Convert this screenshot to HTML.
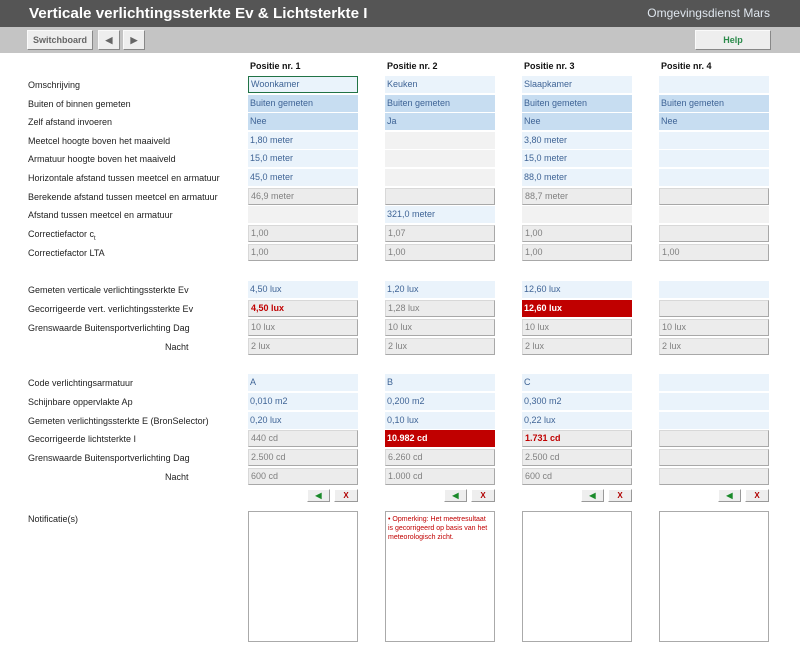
<!DOCTYPE html>
<html><head><meta charset="utf-8"><style>
*{margin:0;padding:0;box-sizing:border-box}
body{width:800px;height:671px;background:#fff;font-family:"Liberation Sans",Arial,sans-serif;position:relative;overflow:hidden;font-size:9px}
#hd{position:absolute;left:0;top:0;width:800px;height:27px;background:#555}
#hd .t{position:absolute;left:29px;top:5px;color:#fff;font-weight:bold;font-size:15.2px}
#hd .o{position:absolute;right:30px;top:6px;color:#dfe6ee;font-size:12px}
#tb{position:absolute;left:0;top:27px;width:800px;height:26px;background:#c4c4c4}
.bt{position:absolute;top:3px;height:20px;background:#eee;border:1px solid #fafafa;border-right-color:#888;border-bottom-color:#888;color:#666;font-weight:bold;font-size:9px;text-align:center;line-height:18px}
.lb{position:absolute;left:28px;color:#222;font-size:9px}
.h{position:absolute;top:61px;font-weight:bold;font-size:9px;color:#111}
.c{position:absolute;width:110px;height:17px;padding-left:2px;line-height:17px;font-size:9px;color:#3f6496}
.l{background:#eaf3fb}
.m{background:#c7ddf1}
.g{background:#ececec;border:1px solid #d8d8d8;border-right-color:#a8a8a8;border-bottom-color:#a8a8a8;color:#808080;line-height:15px}
.e{background:#f2f2f2}
.r{background:#c00000;color:#fff;font-weight:bold}
.rb{color:#c00000;font-weight:bold}
.sb{position:absolute;top:489px;height:13px;background:#eee;border:1px solid #fff;border-right-color:#999;border-bottom-color:#999;font-size:8px;font-weight:bold;text-align:center;line-height:11px}
.nt{position:absolute;top:511px;width:110px;height:131px;border:1px solid #aaa;background:#fff}
</style></head><body>
<div id="hd"><div class="t">Verticale verlichtingssterkte Ev &amp; Lichtsterkte I</div><div class="o">Omgevingsdienst Mars</div></div>
<div id="tb">
<div class="bt" style="left:27px;width:66px">Switchboard</div>
<div class="bt" style="left:98px;width:22px">◀</div>
<div class="bt" style="left:123px;width:22px">▶</div>
<div class="bt" style="left:695px;width:76px;color:#2a8a4a">Help</div>
</div>
<div class="h" style="left:250px">Positie nr. 1</div>
<div class="h" style="left:387px">Positie nr. 2</div>
<div class="h" style="left:524px">Positie nr. 3</div>
<div class="h" style="left:661px">Positie nr. 4</div>

<div class="lb" style="top:80px">Omschrijving</div>
<div class="lb" style="top:99px">Buiten of binnen gemeten</div>
<div class="lb" style="top:117px">Zelf afstand invoeren</div>
<div class="lb" style="top:136px">Meetcel hoogte boven het maaiveld</div>
<div class="lb" style="top:154px">Armatuur hoogte boven het maaiveld</div>
<div class="lb" style="top:173px">Horizontale afstand tussen meetcel en armatuur</div>
<div class="lb" style="top:192px">Berekende afstand tussen meetcel en armatuur</div>
<div class="lb" style="top:210px">Afstand tussen meetcel en armatuur</div>
<div class="lb" style="top:229px">Correctiefactor c<sub style="font-size:6px">t</sub></div>
<div class="lb" style="top:248px">Correctiefactor LTA</div>
<div class="lb" style="top:285px">Gemeten verticale verlichtingssterkte Ev</div>
<div class="lb" style="top:304px">Gecorrigeerde vert. verlichtingssterkte Ev</div>
<div class="lb" style="top:323px">Grenswaarde Buitensportverlichting Dag</div>
<div class="lb" style="top:342px;left:165px">Nacht</div>
<div class="lb" style="top:378px">Code verlichtingsarmatuur</div>
<div class="lb" style="top:397px">Schijnbare oppervlakte Ap</div>
<div class="lb" style="top:416px">Gemeten verlichtingssterkte E (BronSelector)</div>
<div class="lb" style="top:434px">Gecorrigeerde lichtsterkte I</div>
<div class="lb" style="top:453px">Grenswaarde Buitensportverlichting Dag</div>
<div class="lb" style="top:472px;left:165px">Nacht</div>
<div class="lb" style="top:514px">Notificatie(s)</div>

<div class="c l" style="left:248px;top:76px;border:1px solid #217346;line-height:15px">Woonkamer</div>
<div class="c l" style="left:385px;top:76px">Keuken</div>
<div class="c l" style="left:522px;top:76px">Slaapkamer</div>
<div class="c l" style="left:659px;top:76px"></div>
<div class="c m" style="left:248px;top:95px">Buiten gemeten</div>
<div class="c m" style="left:385px;top:95px">Buiten gemeten</div>
<div class="c m" style="left:522px;top:95px">Buiten gemeten</div>
<div class="c m" style="left:659px;top:95px">Buiten gemeten</div>
<div class="c m" style="left:248px;top:113px">Nee</div>
<div class="c m" style="left:385px;top:113px">Ja</div>
<div class="c m" style="left:522px;top:113px">Nee</div>
<div class="c m" style="left:659px;top:113px">Nee</div>
<div class="c l" style="left:248px;top:132px">1,80 meter</div>
<div class="c e" style="left:385px;top:132px"></div>
<div class="c l" style="left:522px;top:132px">3,80 meter</div>
<div class="c l" style="left:659px;top:132px"></div>
<div class="c l" style="left:248px;top:150px">15,0 meter</div>
<div class="c e" style="left:385px;top:150px"></div>
<div class="c l" style="left:522px;top:150px">15,0 meter</div>
<div class="c l" style="left:659px;top:150px"></div>
<div class="c l" style="left:248px;top:169px">45,0 meter</div>
<div class="c e" style="left:385px;top:169px"></div>
<div class="c l" style="left:522px;top:169px">88,0 meter</div>
<div class="c l" style="left:659px;top:169px"></div>
<div class="c g" style="left:248px;top:188px">46,9 meter</div>
<div class="c g" style="left:385px;top:188px"></div>
<div class="c g" style="left:522px;top:188px">88,7 meter</div>
<div class="c g" style="left:659px;top:188px"></div>
<div class="c e" style="left:248px;top:206px"></div>
<div class="c l" style="left:385px;top:206px">321,0 meter</div>
<div class="c e" style="left:522px;top:206px"></div>
<div class="c e" style="left:659px;top:206px"></div>
<div class="c g" style="left:248px;top:225px">1,00</div>
<div class="c g" style="left:385px;top:225px">1,07</div>
<div class="c g" style="left:522px;top:225px">1,00</div>
<div class="c g" style="left:659px;top:225px"></div>
<div class="c g" style="left:248px;top:244px">1,00</div>
<div class="c g" style="left:385px;top:244px">1,00</div>
<div class="c g" style="left:522px;top:244px">1,00</div>
<div class="c g" style="left:659px;top:244px">1,00</div>
<div class="c l" style="left:248px;top:281px">4,50 lux</div>
<div class="c l" style="left:385px;top:281px">1,20 lux</div>
<div class="c l" style="left:522px;top:281px">12,60 lux</div>
<div class="c l" style="left:659px;top:281px"></div>
<div class="c g rb" style="left:248px;top:300px">4,50 lux</div>
<div class="c g" style="left:385px;top:300px">1,28 lux</div>
<div class="c r" style="left:522px;top:300px">12,60 lux</div>
<div class="c g" style="left:659px;top:300px"></div>
<div class="c g" style="left:248px;top:319px">10 lux</div>
<div class="c g" style="left:385px;top:319px">10 lux</div>
<div class="c g" style="left:522px;top:319px">10 lux</div>
<div class="c g" style="left:659px;top:319px">10 lux</div>
<div class="c g" style="left:248px;top:338px">2 lux</div>
<div class="c g" style="left:385px;top:338px">2 lux</div>
<div class="c g" style="left:522px;top:338px">2 lux</div>
<div class="c g" style="left:659px;top:338px">2 lux</div>
<div class="c l" style="left:248px;top:374px">A</div>
<div class="c l" style="left:385px;top:374px">B</div>
<div class="c l" style="left:522px;top:374px">C</div>
<div class="c l" style="left:659px;top:374px"></div>
<div class="c l" style="left:248px;top:393px">0,010 m2</div>
<div class="c l" style="left:385px;top:393px">0,200 m2</div>
<div class="c l" style="left:522px;top:393px">0,300 m2</div>
<div class="c l" style="left:659px;top:393px"></div>
<div class="c l" style="left:248px;top:412px">0,20 lux</div>
<div class="c l" style="left:385px;top:412px">0,10 lux</div>
<div class="c l" style="left:522px;top:412px">0,22 lux</div>
<div class="c l" style="left:659px;top:412px"></div>
<div class="c g" style="left:248px;top:430px">440 cd</div>
<div class="c r" style="left:385px;top:430px">10.982 cd</div>
<div class="c g rb" style="left:522px;top:430px">1.731 cd</div>
<div class="c g" style="left:659px;top:430px"></div>
<div class="c g" style="left:248px;top:449px">2.500 cd</div>
<div class="c g" style="left:385px;top:449px">6.260 cd</div>
<div class="c g" style="left:522px;top:449px">2.500 cd</div>
<div class="c g" style="left:659px;top:449px"></div>
<div class="c g" style="left:248px;top:468px">600 cd</div>
<div class="c g" style="left:385px;top:468px">1.000 cd</div>
<div class="c g" style="left:522px;top:468px">600 cd</div>
<div class="c g" style="left:659px;top:468px"></div>

<div class="sb" style="left:307px;width:23px;color:#1a8a2a">◀</div><div class="sb" style="left:334px;width:24px;color:#b00000">X</div>
<div class="sb" style="left:444px;width:23px;color:#1a8a2a">◀</div><div class="sb" style="left:471px;width:24px;color:#b00000">X</div>
<div class="sb" style="left:581px;width:23px;color:#1a8a2a">◀</div><div class="sb" style="left:608px;width:24px;color:#b00000">X</div>
<div class="sb" style="left:718px;width:23px;color:#1a8a2a">◀</div><div class="sb" style="left:745px;width:24px;color:#b00000">X</div>

<div class="nt" style="left:248px"></div>
<div class="nt" style="left:385px;color:#c00000;font-size:7px;padding:3px 2px;line-height:9px">• Opmerking: Het meetresultaat is gecorrigeerd op basis van het meteorologisch zicht.</div>
<div class="nt" style="left:522px"></div>
<div class="nt" style="left:659px"></div>
</body></html>
